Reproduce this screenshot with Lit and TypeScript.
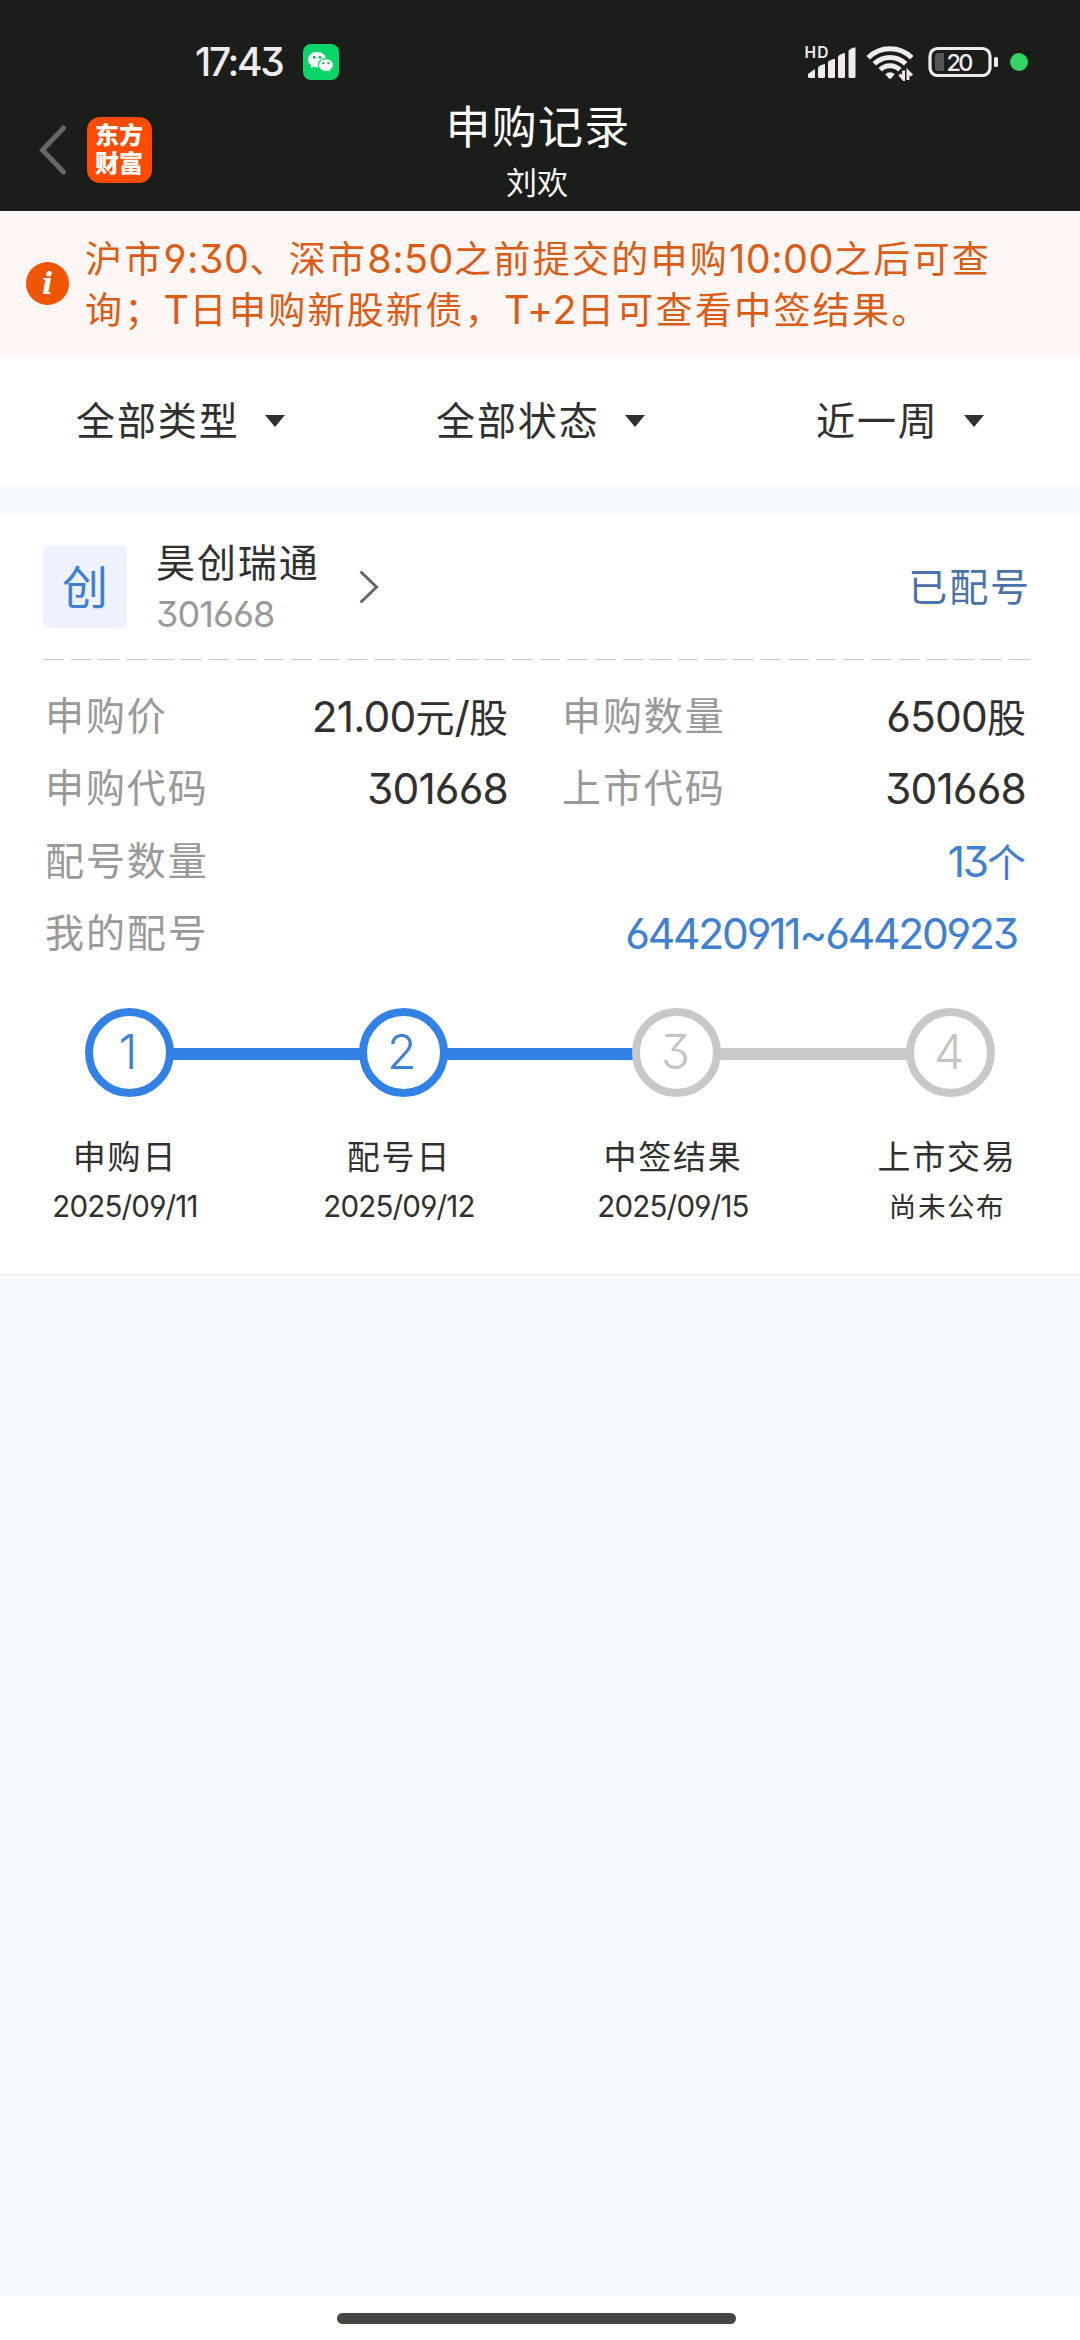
import { LitElement, html, css } from "lit";
import { customElement, property } from "lit/decorators.js";

const fontStack = css`
  font-family: Inter, "Noto Sans CJK SC", sans-serif;
  font-feature-settings: "cv03", "cv04", "cv09", "calt" 0;
`;

/** Wraps runs of Latin characters so that they can be sized apart from the Chinese text. */
const mixed = (text: string) =>
  text
    .split(/([\x21-\x7e]+)/)
    .filter((part) => part)
    .map((part) => (/^[\x21-\x7e]/.test(part) ? html`<span class="n">${part}</span>` : part));

@customElement("status-bar")
class StatusBar extends LitElement {
  static styles = css`
    :host {
      display: flex;
      align-items: center;
      height: 38px;
      padding: 43px 52px 0 195px;
      color: #efebef;
      ${fontStack}
    }
    svg {
      display: block;
      flex: none;
    }
    .time {
      width: 108px;
      font-size: 39px;
      line-height: 38px;
      letter-spacing: -2.3px;
      font-weight: 500;
      white-space: nowrap;
    }
    .space {
      flex: 1;
    }
    .hd,
    .level {
      fill: #efebef;
      font-family: Inter, sans-serif;
    }
    .hd {
      font-size: 15.5px;
      font-weight: 600;
    }
    .level {
      font-size: 23.5px;
      font-weight: 500;
    }
    .wifi {
      margin-left: 9px;
    }
    .battery {
      margin-left: 12px;
    }
    .dot {
      width: 18px;
      height: 18px;
      margin-left: 12px;
      border-radius: 50%;
      background: #34d365;
    }
  `;

  render() {
    return html`
      <div class="time">17:43</div>
      <svg width="36" height="36" viewBox="0 0 36 36">
        <rect width="36" height="36" rx="8" fill="#07d568" />
        <path d="M14 8C8.700 8 5 11.500 5 15.600c0 2.500 1.300 4.600 3.400 6L7.600 24.300l3.100-1.500c1 .3 2.100.4 3.300.4 5.300 0 9-3.400 9-7.600S19.300 8 14 8z" fill="#fff" />
        <path d="M22.900 14.600c-4.500 0-7.600 2.900-7.600 6.500s3.100 6.400 7.600 6.400c.9 0 1.800-.1 2.600-.4l2.700 1.300-.7-2.300c1.900-1.200 3-3 3-5 0-3.600-3.100-6.500-7.600-6.500z" fill="#fff" stroke="#07d568" stroke-width="1.200" />
        <circle cx="11.200" cy="13.300" r="1.400" fill="#07a653" />
        <circle cx="17" cy="13.300" r="1.400" fill="#07a653" />
        <circle cx="20.500" cy="19.200" r="1.100" fill="#07a653" />
        <circle cx="25.400" cy="19.200" r="1.100" fill="#07a653" />
      </svg>
      <div class="space"></div>
      <svg width="52" height="38" viewBox="0 0 52 38">
        <text class="hd" x="-0.500" y="14.700" textLength="24">HD</text>
        <g fill="#efebef">
          <path d="M3 31l6-4.500h1V35H4.500Q3 35 3 33.500z" />
          <path d="M13 24.500Q13.500 23 18.500 21.300H20V33.500Q20 35 18.500 35h-4Q13 35 13 33.500z" />
          <path d="M23 19Q23.500 17.500 28.500 16H30V33.500Q30 35 28.500 35h-4Q23 35 23 33.500z" />
          <path d="M33 13.500Q33.500 12 38.500 10.300H40V33.500Q40 35 38.500 35h-4Q33 35 33 33.500z" />
          <path d="M43.500 8Q44 6 49 4.500H50.500V33.500Q50.500 35 49 35h-4Q43.500 35 43.500 33.500z" />
        </g>
      </svg>
      <svg class="wifi" width="50" height="38" viewBox="0 0 50 38">
        <g fill="none" stroke="#efebef" stroke-width="5">
          <path d="M2.200 14.800A31 31 0 0 1 45.800 14.800" />
          <path d="M8.300 20.800A22.500 22.500 0 0 1 39.700 20.800" />
          <path d="M14.200 26.700A14 14 0 0 1 33.800 26.700" />
        </g>
        <path d="M19.300 31.300A6.600 6.600 0 0 1 28.700 31.300L25.200 35.200Q24 36.200 22.800 35.200z" fill="#efebef" />
        <path d="M37.500 27.500V36L33.500 31.500M42 37V28.500L46 32.500" fill="none" stroke="#efebef" stroke-width="3" />
      </svg>
      <svg class="battery" width="70" height="38" viewBox="0 0 70 38">
        <rect x="2" y="5.500" width="60" height="27" rx="7.500" fill="none" stroke="#efebef" stroke-width="3.200" />
        <rect x="66" y="14" width="4" height="10" rx="1.500" fill="#efebef" />
        <path d="M10.500 10H16V28H10.500Q7 28 7 24.500V13.500Q7 10 10.500 10z" fill="#555" />
        <text class="level" x="18.500" y="27.500" textLength="27">20</text>
      </svg>
      <div class="dot"></div>
    `;
  }
}

@customElement("title-bar")
class TitleBar extends LitElement {
  static styles = css`
    :host {
      display: grid;
      grid-template-columns: 300px 1fr 300px;
      height: 130px;
      color: #fff;
      ${fontStack}
    }
    .left {
      display: flex;
      align-items: center;
      gap: 19px;
      height: 130px;
      box-sizing: border-box;
      padding: 8px 0 0 38px;
    }
    .logo {
      width: 65px;
      height: 66px;
      box-sizing: border-box;
      padding: 3px 8px 0;
      border-radius: 13px;
      background: #ff4b00;
      font-family: "Noto Sans CJK SC", sans-serif;
      font-size: 24px;
      font-weight: 900;
      line-height: 28px;
      word-break: break-all;
    }
    .mid {
      display: flex;
      flex-direction: column;
      align-items: center;
      padding-top: 19px;
    }
    .title {
      font-size: 45px;
      line-height: 56px;
      letter-spacing: 1.3px;
      margin-right: 4px;
    }
    .user {
      font-size: 31px;
      line-height: 40px;
      margin-top: 7px;
      margin-right: 6px;
    }
  `;

  render() {
    return html`
      <div class="left">
        <svg width="30" height="52" viewBox="0 0 30 52">
          <path d="M25.500 4L4.500 26l21 22" fill="none" stroke="#666865" stroke-width="5" stroke-linecap="round" />
        </svg>
        <div class="logo">东方财富</div>
      </div>
      <div class="mid">
        <div class="title">申购记录</div>
        <div class="user">刘欢</div>
      </div>
    `;
  }
}

@customElement("notice-bar")
class NoticeBar extends LitElement {
  static styles = css`
    :host {
      display: flex;
      align-items: center;
      height: 145px;
      padding: 0 26px;
      box-sizing: border-box;
      background: #fff6f6;
      color: #d95c17;
      ${fontStack}
    }
    .info {
      display: grid;
      place-content: center;
      width: 43px;
      height: 43px;
      border-radius: 50%;
      background: #f05500;
      color: #fff;
      font: italic 700 29px/40px "DejaVu Serif", serif;
    }
    .lines {
      margin-left: 16px;
      padding-top: 3px;
      font-size: 37px;
      line-height: 51px;
      letter-spacing: 2.3px;
      white-space: nowrap;
    }
    .n {
      font-size: 39.5px;
      line-height: 1;
      letter-spacing: 0.5px;
    }
  `;

  render() {
    return html`
      <div class="info">i</div>
      <div class="lines">
        <div>${mixed("沪市9:30、深市8:50之前提交的申购10:00之后可查")}</div>
        <div>${mixed("询；T日申购新股新债，T+2日可查看中签结果。")}</div>
      </div>
    `;
  }
}

@customElement("filter-tabs")
class FilterTabs extends LitElement {
  static styles = css`
    :host {
      display: grid;
      grid-template-columns: 360px 380px auto;
      align-items: center;
      height: 130px;
      padding: 0 0 1px 76px;
      box-sizing: border-box;
      background: #fff;
      color: #303030;
      ${fontStack}
    }
    .tab {
      display: flex;
      align-items: center;
      gap: 25px;
      font-size: 39px;
      line-height: 56px;
      letter-spacing: 1.9px;
    }
  `;

  render() {
    return ["全部类型", "全部状态", "近一周"].map(
      (label) => html`
        <div class="tab">
          <span>${label}</span>
          <svg width="20" height="12" viewBox="0 0 20 12"><path d="M0 0h20L10 12z" fill="#303030" /></svg>
        </div>
      `
    );
  }
}

type Step = { title: string; date: string; done: boolean };

@customElement("step-track")
class StepTrack extends LitElement {
  @property({ attribute: false }) steps: Step[] = [];

  static styles = css`
    :host {
      display: block;
      color: #303030;
      ${fontStack}
    }
    .rail {
      display: flex;
      align-items: center;
      padding: 0 85px;
    }
    .ring {
      display: grid;
      place-content: center;
      width: 89px;
      height: 89px;
      box-sizing: border-box;
      border: 8px solid #c8c8c8;
      border-radius: 50%;
      color: #c4c4c4;
      font-size: 48px;
      line-height: 72px;
      font-weight: 350;
      padding-right: 3px;
    }
    .ring.done {
      border-color: #3282e6;
      color: #3f80cf;
    }
    .link {
      flex: 1;
      height: 12px;
      margin: 3px -1px 0;
      background: #c8c8c8;
    }
    .link.done {
      background: #3282e6;
    }
    .labels {
      display: flex;
      justify-content: space-between;
      padding: 36px 48px 0 40px;
    }
    .label {
      width: 170px;
      text-align: center;
      white-space: nowrap;
    }
    .title {
      font-size: 33px;
      line-height: 48px;
      letter-spacing: 1.8px;
    }
    .date {
      font-size: 27.5px;
      line-height: 50px;
      letter-spacing: 1.6px;
      padding-top: 1px;
    }
    .n {
      font-size: 29.5px;
      line-height: 1;
      letter-spacing: -0.8px;
    }
  `;

  render() {
    return html`
      <div class="rail">
        ${this.steps.map(
          (step, i) => html`
            ${i ? html`<div class="link ${this.steps[i - 1].done ? "done" : ""}"></div>` : ""}
            <div class="ring ${step.done ? "done" : ""}">${i + 1}</div>
          `
        )}
      </div>
      <div class="labels">
        ${this.steps.map(
          (step) => html`
            <div class="label">
              <div class="title">${step.title}</div>
              <div class="date">${mixed(step.date)}</div>
            </div>
          `
        )}
      </div>
    `;
  }
}

@customElement("record-card")
class RecordCard extends LitElement {
  static styles = css`
    :host {
      display: block;
      height: 761px;
      box-sizing: border-box;
      border-bottom: 1px solid #ebecf0;
      background: #fff;
      color: #303030;
      ${fontStack}
    }
    .head {
      display: flex;
      align-items: center;
      height: 145px;
      box-sizing: border-box;
      padding: 0 49px 0 43px;
    }
    .badge {
      display: grid;
      place-content: center;
      width: 84px;
      height: 83px;
      border-radius: 6px;
      background: #eef2ff;
      color: #3f80cf;
      font-size: 46px;
      line-height: 60px;
    }
    .stock {
      margin-left: 29px;
      padding-top: 5px;
      width: 203px;
    }
    .name {
      font-size: 39px;
      line-height: 50px;
      letter-spacing: 1.9px;
      white-space: nowrap;
    }
    .code {
      color: #999;
      font-size: 36px;
      line-height: 52px;
      letter-spacing: -0.9px;
    }
    .state {
      margin-left: auto;
      color: #4a72a8;
      font-size: 39px;
      line-height: 56px;
      letter-spacing: 1.9px;
    }
    .dash {
      height: 1px;
      margin: 0 50px 0 43px;
      background: repeating-linear-gradient(90deg, #c8c8c8 0 20.7px, transparent 20.7px 27.6px);
    }
    .facts {
      display: grid;
      grid-template-columns: 463px 464px;
      column-gap: 54px;
      grid-auto-rows: 72.4px;
      padding: 20px 0 0 45px;
      font-size: 39px;
      line-height: 72.4px;
      white-space: nowrap;
    }
    .fact {
      display: flex;
      justify-content: space-between;
    }
    .wide {
      grid-column: span 2;
    }
    .key {
      color: #999;
      letter-spacing: 1.9px;
    }
    .value {
      padding-top: 2px;
    }
    .blue {
      color: #3f80cf;
    }
    .lot {
      padding-right: 9px;
    }
    .n {
      font-size: 42.5px;
      line-height: 1;
      letter-spacing: -0.85px;
    }
    .blue .n {
      letter-spacing: -2.2px;
    }
    .steps {
      margin-top: 38px;
    }
  `;

  private facts = [
    { key: "申购价", value: "21.00元/股", cls: "" },
    { key: "申购数量", value: "6500股", cls: "" },
    { key: "申购代码", value: "301668", cls: "" },
    { key: "上市代码", value: "301668", cls: "" },
    { key: "配号数量", value: "13个", cls: "wide" },
    { key: "我的配号", value: "64420911~64420923", cls: "wide lot" },
  ];

  private steps: Step[] = [
    { title: "申购日", date: "2025/09/11", done: true },
    { title: "配号日", date: "2025/09/12", done: true },
    { title: "中签结果", date: "2025/09/15", done: false },
    { title: "上市交易", date: "尚未公布", done: false },
  ];

  render() {
    return html`
      <div class="head">
        <div class="badge">创</div>
        <div class="stock">
          <div class="name">昊创瑞通</div>
          <div class="code">301668</div>
        </div>
        <svg width="20" height="34" viewBox="0 0 20 34">
          <path d="M1.500 1.500L17.500 17l-16 15.500" fill="none" stroke="#666" stroke-width="3" />
        </svg>
        <div class="state">已配号</div>
      </div>
      <div class="dash"></div>
      <div class="facts">
        ${this.facts.map(
          (f) => html`
            <div class="fact ${f.cls}">
              <span class="key">${f.key}</span>
              <span class="value ${f.cls ? "blue" : ""}">${mixed(f.value)}</span>
            </div>
          `
        )}
      </div>
      <step-track class="steps" .steps=${this.steps}></step-track>
    `;
  }
}

@customElement("app-root")
class AppRoot extends LitElement {
  static styles = css`
    :host {
      display: flex;
      flex-direction: column;
      width: 1080px;
      height: 2340px;
      background: #f6faff;
    }
    .top {
      height: 211px;
      background: #1a1d1a;
    }
    .card {
      margin-top: 28px;
    }
    .home {
      display: flex;
      justify-content: center;
      height: 44px;
      box-sizing: border-box;
      margin-top: auto;
      padding: 17px 7px 0 0;
      background: #fff;
    }
    .pill {
      width: 399px;
      height: 10.5px;
      border-radius: 6px;
      background: #454743;
    }
  `;

  render() {
    return html`
      <div class="top">
        <status-bar></status-bar>
        <title-bar></title-bar>
      </div>
      <notice-bar></notice-bar>
      <filter-tabs></filter-tabs>
      <record-card class="card"></record-card>
      <div class="home"><div class="pill"></div></div>
    `;
  }
}
